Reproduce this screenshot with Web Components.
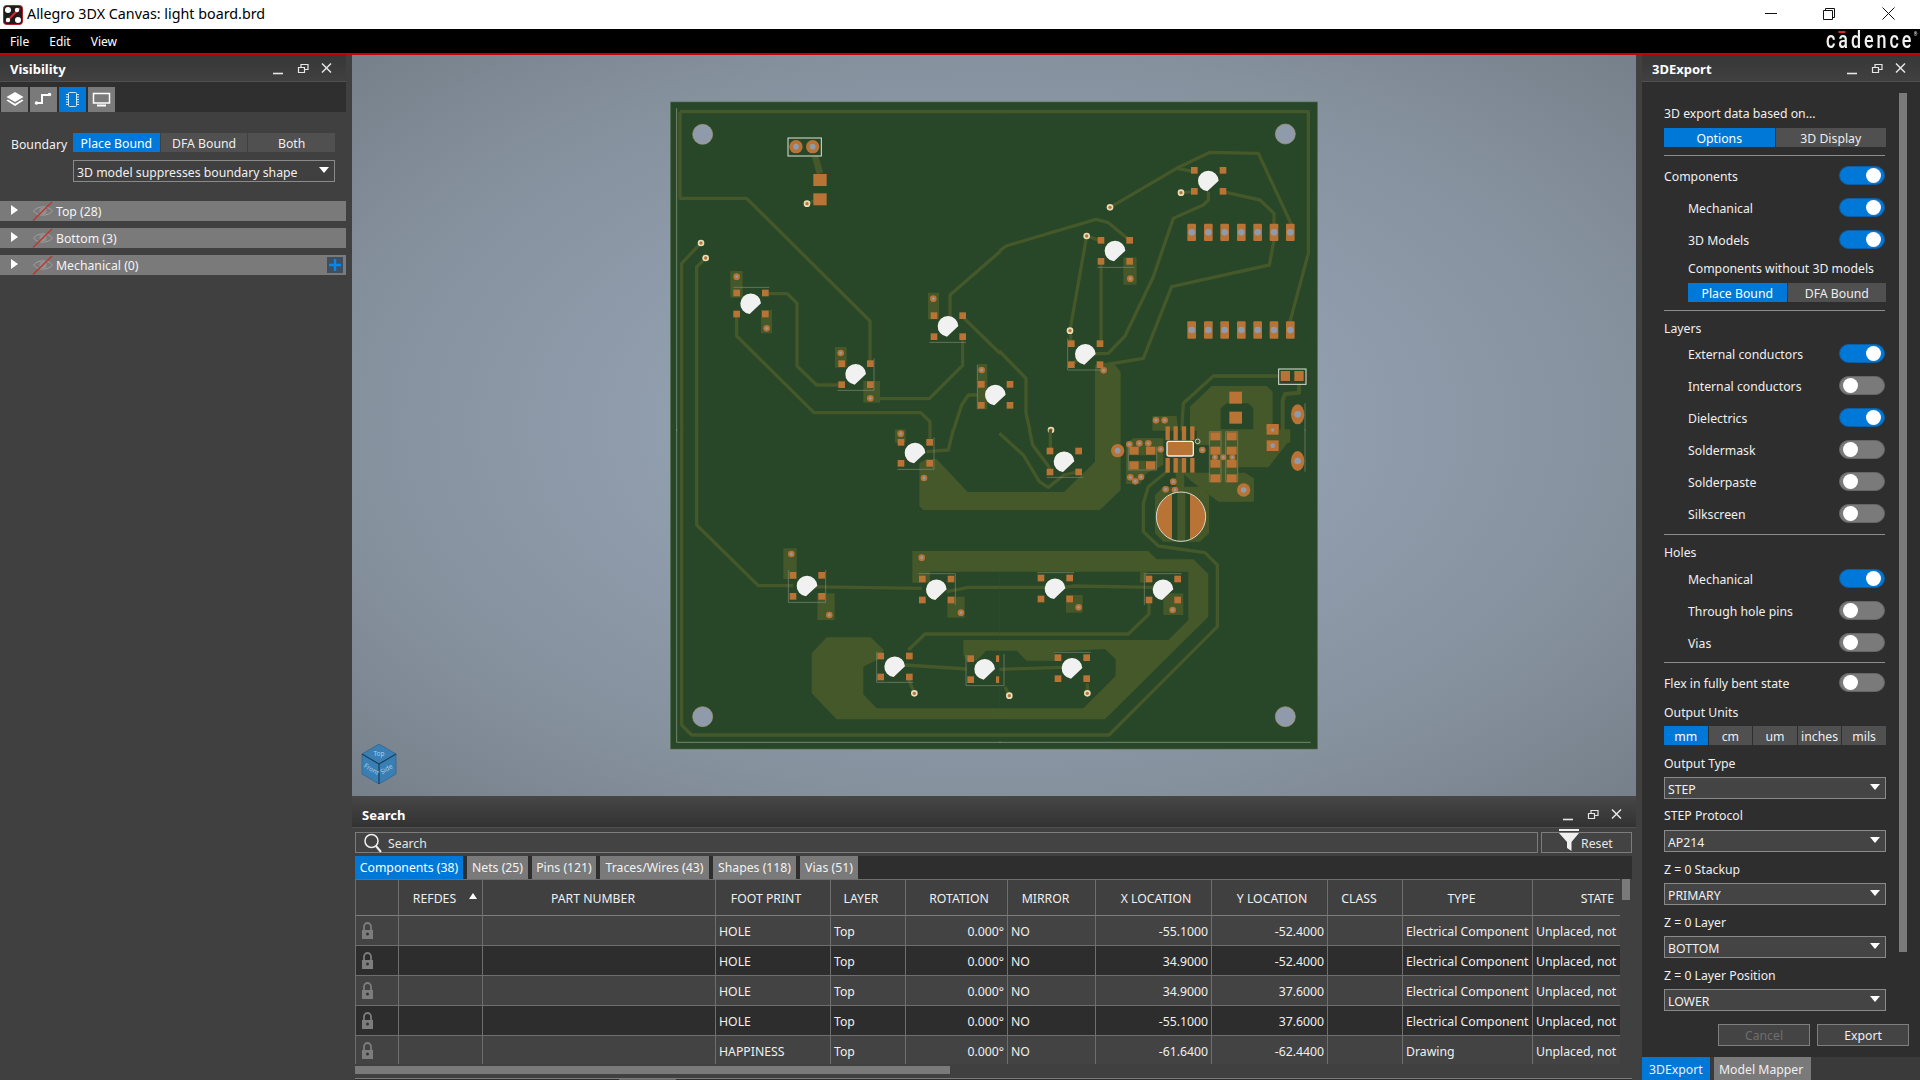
<!DOCTYPE html>
<html>
<head>
<meta charset="utf-8">
<title>Allegro 3DX Canvas</title>
<style>
html, body { margin: 0; padding: 0; width: 1920px; height: 1080px; overflow: hidden; background: #404040; }
body { font: 12.25px "Noto Sans", "Open Sans", sans-serif; color: #f0f0f0; }
main-row { display: flex; height: 1025px; }
.center { display: flex; flex-direction: column; width: 1284px; margin: 0 6px; }
</style>
</head>
<body>
<title-bar></title-bar>
<menu-bar></menu-bar>
<main-row>
  <visibility-panel></visibility-panel>
  <div class="center">
    <board-canvas></board-canvas>
    <search-panel></search-panel>
  </div>
  <export-panel>
    <opt-label style="margin-top:23px">3D export data based on...</opt-label>
    <seg-buttons items="Options|3D Display" style="margin-top:7px"></seg-buttons>
    <thin-rule style="margin-top:8px"></thin-rule>
    <toggle-row on style="margin-top:10px">Components</toggle-row>
    <toggle-row on indent style="margin-top:13px">Mechanical</toggle-row>
    <toggle-row on indent style="margin-top:13px">3D Models</toggle-row>
    <opt-label indent style="margin-top:11px">Components without 3D models</opt-label>
    <seg-buttons indent items="Place Bound|DFA Bound" style="margin-top:7px"></seg-buttons>
    <thin-rule style="margin-top:8px"></thin-rule>
    <opt-label style="margin-top:9px">Layers</opt-label>
    <toggle-row on indent style="margin-top:8px">External conductors</toggle-row>
    <toggle-row indent style="margin-top:13px">Internal conductors</toggle-row>
    <toggle-row on indent style="margin-top:13px">Dielectrics</toggle-row>
    <toggle-row indent style="margin-top:13px">Soldermask</toggle-row>
    <toggle-row indent style="margin-top:13px">Solderpaste</toggle-row>
    <toggle-row indent style="margin-top:13px">Silkscreen</toggle-row>
    <thin-rule style="margin-top:11px"></thin-rule>
    <opt-label style="margin-top:9px">Holes</opt-label>
    <toggle-row on indent style="margin-top:9px">Mechanical</toggle-row>
    <toggle-row indent style="margin-top:13px">Through hole pins</toggle-row>
    <toggle-row indent style="margin-top:13px">Vias</toggle-row>
    <thin-rule style="margin-top:10px"></thin-rule>
    <toggle-row style="margin-top:10px">Flex in fully bent state</toggle-row>
    <opt-label style="margin-top:12px">Output Units</opt-label>
    <seg-buttons items="mm|cm|um|inches|mils" style="margin-top:6px"></seg-buttons>
    <opt-label style="margin-top:10px">Output Type</opt-label>
    <drop-select style="margin-top:6px">STEP</drop-select>
    <opt-label style="margin-top:8px">STEP Protocol</opt-label>
    <drop-select style="margin-top:7px">AP214</drop-select>
    <opt-label style="margin-top:9px">Z = 0 Stackup</opt-label>
    <drop-select style="margin-top:6px">PRIMARY</drop-select>
    <opt-label style="margin-top:9px">Z = 0 Layer</opt-label>
    <drop-select style="margin-top:6px">BOTTOM</drop-select>
    <opt-label style="margin-top:9px">Z = 0 Layer Position</opt-label>
    <drop-select style="margin-top:6px">LOWER</drop-select>
  </export-panel>
</main-row>

<script>
class TitleBar extends HTMLElement {
  connectedCallback () {
    this.attachShadow({mode: "open"}).innerHTML = `<style>
      :host { display: flex; align-items: center; height: 29px; background: #fff; color: #000; }
      svg.logo { margin: 0 4px 0 3px; }
      span { font-size: 14.3px; flex: 1; padding-bottom: 2px; }
      svg.ctl { margin-right: 21px; margin-bottom: 2px; }
    </style>
    <svg class="logo" width="20" height="20" viewBox="0 0 20 20">
      <rect x=".5" y=".5" width="19" height="19" rx="3" fill="#1d1d1d" stroke="#b3202a"/>
      <path d="M3 17L17 3" stroke="#d8262f" stroke-width="2"/>
      <circle cx="5" cy="5" r="3" fill="#fff"/><circle cx="15" cy="15" r="3" fill="#fff"/>
      <circle cx="14" cy="5" r="2.2" fill="#fff"/><circle cx="5" cy="15" r="2.2" fill="#fff"/>
    </svg>
    <span>Allegro 3DX Canvas: light board.brd</span>
    <svg class="ctl" width="134" height="14" viewBox="0 0 134 14" fill="none" stroke="#111">
      <path d="M0 6.5H12"/>
      <path d="M58.5 3.5h9v9h-9zM60.5 3.5v-2h9v9h-2"/>
      <path d="M117.5 .5l12 12M129.5 .5l-12 12"/>
    </svg>`;
  }
}
customElements.define("title-bar", TitleBar);

class MenuBar extends HTMLElement {
  connectedCallback () {
    this.attachShadow({mode: "open"}).innerHTML = `<style>
      :host { display: flex; align-items: center; height: 24px; background: #000; border-bottom: 2px solid #c4000b; color: #fff; position: relative; }
      span { font-size: 12px; margin-left: 10px; margin-right: 10px; }
      .brand { margin-left: auto; margin-right: 6px; position: relative; font: 500 23px/24px Roboto, sans-serif; letter-spacing: 3.8px; transform-origin: right center; transform: scaleX(.78); color: #f2f2f2; }
      .brand i { position: absolute; left: 16px; top: 2px; width: 9px; height: 2px; background: #d8262f; }
      .brand sup { position: absolute; right: -4px; top: 2px; font-size: 6px; line-height: 6px; letter-spacing: 0; }
    </style>
    <span>File</span><span>Edit</span><span>View</span>
    <div class="brand">cadence<i></i><sup>®</sup></div>`;
  }
}
customElements.define("menu-bar", MenuBar);

class DockHeader extends HTMLElement {
  connectedCallback () {
    this.attachShadow({mode: "open"}).innerHTML = `<style>
      :host { display: flex; align-items: center; justify-content: space-between; box-sizing: border-box; height: var(--hh, 27px); padding: var(--hpt, 2px) 14px 0 10px; background: var(--hbg, linear-gradient(#373737, #404040)); border-bottom: 1px solid #505050; flex: none; }
      b { font-size: 13px; color: #fff; font-weight: 700; }
    </style>
    <b><slot></slot></b>
    <svg width="60" height="14" viewBox="0 0 60 14" fill="none" stroke="#e6e6e6">
      <path d="M1 11.5H11" stroke-width="1.6"/>
      <path d="M26.5 5.5h6v5h-6zM29 5V2.5h7v5h-3" stroke-width="1.2"/>
      <path d="M50 1.5l9 9M59 1.5l-9 9" stroke-width="1.5"/>
    </svg>`;
  }
}
customElements.define("dock-header", DockHeader);

class SegButtons extends HTMLElement {
  connectedCallback () {
    const items = this.getAttribute("items").split("|");
    const btns = items.map((t, i) => `<div class="${i == 0 ? "on" : ""}">${t}</div>`).join("");
    this.attachShadow({mode: "open"}).innerHTML = `<style>
      :host { display: flex; gap: 1px; height: 19px; ${this.hasAttribute("indent") ? "margin-left:24px;width:198px;" : "width:222px;"} }
      div { flex: 1 1 0; background: #505050; color: #eee; text-align: center; font-size: 12.25px; line-height: 21px; height: 19px; overflow: hidden; white-space: nowrap; }
      .on { background: #0078d7; color: #fff; }
    </style>${btns}`;
  }
}
customElements.define("seg-buttons", SegButtons);

class OptLabel extends HTMLElement {
  connectedCallback () {
    this.attachShadow({mode: "open"}).innerHTML = `<style>
      :host { display: block; height: 16px; line-height: 18px; font-size: 12.25px; white-space: nowrap; color: #f0f0f0; ${this.hasAttribute("indent") ? "padding-left:24px;" : ""} }
    </style><slot></slot>`;
  }
}
customElements.define("opt-label", OptLabel);

class ThinRule extends HTMLElement {
  connectedCallback () {
    this.attachShadow({mode: "open"}).innerHTML = `<style>
      :host { display: block; height: 1px; background: #8c8c8c; width: 221px; }
    </style>`;
  }
}
customElements.define("thin-rule", ThinRule);

class ToggleRow extends HTMLElement {
  connectedCallback () {
    const on = this.hasAttribute("on");
    this.attachShadow({mode: "open"}).innerHTML = `<style>
      :host { display: flex; align-items: center; justify-content: space-between; height: 19px; font-size: 12.25px; width: 221px; ${this.hasAttribute("indent") ? "padding-left:24px;width:197px;" : ""} }
      span { padding-top: 2px; }
      .sw { box-sizing: border-box; width: 46px; height: 19px; border-radius: 10px; display: flex; align-items: center; padding: 0 3px;
            background: ${on ? "#0078d7" : "#7a7a7a"}; border: 1px solid ${on ? "#0b5ea6" : "#666"}; justify-content: ${on ? "flex-end" : "flex-start"}; }
      .sw i { width: 15px; height: 15px; border-radius: 50%; background: #fff; }
    </style><span><slot></slot></span><div class="sw"><i></i></div>`;
  }
}
customElements.define("toggle-row", ToggleRow);

class DropSelect extends HTMLElement {
  connectedCallback () {
    this.attachShadow({mode: "open"}).innerHTML = `<style>
      :host { display: flex; align-items: center; justify-content: space-between; box-sizing: border-box; height: 22px; width: var(--w, 222px); margin-left: var(--ml, 0); padding: 0 5px 0 3px; background: #444; border: 1px solid #8a8a8a; font-size: 12.25px; white-space: nowrap; }
      span { padding-top: 2px; }
      i { width: 0; height: 0; border-left: 5px solid transparent; border-right: 5px solid transparent; border-top: 6px solid #fff; margin-bottom: 2px; }
    </style><span><slot></slot></span><i></i>`;
  }
}
customElements.define("drop-select", DropSelect);

const eyeOff = `<svg width="22" height="20" viewBox="0 0 22 20" fill="none">
  <path d="M1.5 10C6 4.5 16 4.5 20.5 10C16 15.5 6 15.5 1.5 10z" stroke="#a0a0a0"/>
  <circle cx="11" cy="10" r="3.6" fill="#909090"/>
  <path d="M1 19.5L20 1" stroke="#c0342c" stroke-width="1.3"/>
</svg>`;

class GroupRow extends HTMLElement {
  connectedCallback () {
    const plus = this.hasAttribute("plus");
    this.attachShadow({mode: "open"}).innerHTML = `<style>
      :host { display: flex; align-items: center; height: 20px; background: #7a7a7a; width: 346px; color: #f4f4f4; font-size: 12.25px; }
      .tri { width: 0; height: 0; border-left: 7px solid #fff; border-top: 5px solid transparent; border-bottom: 5px solid transparent; margin: 0 14px 2px 11px; }
      svg { margin-right: 2px; flex: none; }
      span { flex: 1; padding-top: 1px; }
      .plus { width: 16px; height: 16px; background: #3d4f60; margin-right: 3px; display: flex; }
      .plus svg { margin: 0; }
    </style><div class="tri"></div>${eyeOff}<span><slot></slot></span>${plus ? `<div class="plus"><svg width="16" height="16"><path d="M8 2v12M2 8h12" stroke="#0a86e8" stroke-width="2.4"/></svg></div>` : ""}`;
  }
}
customElements.define("group-row", GroupRow);

class VisibilityPanel extends HTMLElement {
  connectedCallback () {
    this.attachShadow({mode: "open"}).innerHTML = `<style>
      :host { display: block; width: 346px; height: 1025px; background: #404040; flex: none; }
      .tools { display: flex; gap: 2px; height: 30px; box-sizing: border-box; padding: 5px 0 0 1px; background: #2f2f2f; }
      .tools div { width: 27px; height: 25px; background: #7a7a7a; display: flex; }
      .tools .on { background: #0078d7; }
      .bound { display: flex; align-items: center; margin-top: 21px; height: 19px; }
      .bound span { width: 73px; box-sizing: border-box; padding-left: 11px; padding-top: 4px; }
      .bound seg-buttons { width: 262px; }
      drop-select { margin-top: 8px; --ml: 73px; --w: 262px; background: #404040; }
      group-row { margin-bottom: 7px; }
      .groups { margin-top: 19px; }
    </style>
    <dock-header>Visibility</dock-header>
    <div class="tools">
      <div><svg width="27" height="25" fill="#fff"><path d="M14 5l8.500 5-8.500 5-8.500-5z"/><path d="M7 12.500l7 4.300 7-4.300 1.500 1L14 19l-8.500-5.500z"/></svg></div>
      <div><svg width="27" height="25" fill="none" stroke="#fff" stroke-width="2"><path d="M7 16h5V8h7"/><circle cx="6.500" cy="16" r="1.800" fill="#fff" stroke="none"/><circle cx="19.500" cy="7.500" r="1.800" fill="#fff" stroke="none"/></svg></div>
      <div class="on"><svg width="27" height="25" fill="none" stroke="#cfe6fa"><rect x="9.500" y="5.500" width="8" height="14" rx="1"/><path d="M7 7.500h2M7 10h2M7 12.500h2M7 15h2M7 17.500h2M18 7.500h2M18 10h2M18 12.500h2M18 15h2M18 17.500h2"/></svg></div>
      <div><svg width="27" height="25" fill="none" stroke="#fff"><rect x="5.500" y="6.500" width="16" height="9.500" stroke-width="1.500"/><path d="M9 18.500h9" stroke-width="2"/></svg></div>
    </div>
    <div class="bound"><span>Boundary</span><seg-buttons items="Place Bound|DFA Bound|Both" style="width:262px"></seg-buttons></div>
    <drop-select>3D model suppresses boundary shape</drop-select>
    <div class="groups">
      <group-row>Top (28)</group-row>
      <group-row>Bottom (3)</group-row>
      <group-row plus>Mechanical (0)</group-row>
    </div>`;
  }
}
customElements.define("visibility-panel", VisibilityPanel);

class ExportPanel extends HTMLElement {
  connectedCallback () {
    this.attachShadow({mode: "open"}).innerHTML = `<style>
      :host { display: flex; flex-direction: column; width: 278px; height: 1025px; background: #2e2e2e; flex: none; }
      .body { display: flex; height: 929px; padding-left: 22px; }
      .col { width: 222px; display: flex; flex-direction: column; }
      .sb { width: 8px; height: 859px; margin: 11px 0 0 13px; background: #7a7a7a; }
      .acts { display: flex; gap: 7px; margin: 13px 0 0 76px; }
      .acts div { box-sizing: border-box; width: 92px; height: 22px; line-height: 22px; text-align: center; background: #444; border: 1px solid #7e7e7e; font-size: 12.25px; }
      .acts .off { color: #6e6e6e; }
      .tabs { display: flex; gap: 4px; height: 23px; margin-top: 11px; background: #3a3a3a; }
      .tabs div { line-height: 25px; font-size: 12.25px; padding: 0 7px; white-space: nowrap; }
      .tabs .on { background: #0078d7; width: 54px; }
      .tabs .off { background: #7a7a7a; width: 91px; padding: 0 1px 0 5px; }
    </style>
    <dock-header>3DExport</dock-header>
    <div class="body"><div class="col"><slot></slot></div><div class="sb"></div></div>
    <div class="acts"><div class="off">Cancel</div><div>Export</div></div>
    <div class="tabs"><div class="on">3DExport</div><div class="off">Model Mapper</div></div>`;
  }
}
customElements.define("export-panel", ExportPanel);

// board geometry is in crop units: 3 units = 1 screen px, each quadrant is 1020 units
const OLIVE = "#45582a", BOARD = "#284628", COPPER = "#b97335", HOLE = "#8f9bab";

const pl = (pts, w = 10) => `<polyline points="${pts}" fill="none" stroke="${OLIVE}" stroke-width="${w}" stroke-linejoin="round"/>`;
const poly = (pts, f = OLIVE) => `<polygon points="${pts}" fill="${f}"/>`;
const silk = (pts, c = "#7f8c75", w = 2) => `<polyline points="${pts}" fill="none" stroke="${c}" stroke-width="${w}"/>`;
const pad = (x, y, w = 20, h = 20) => `<rect x="${x - w / 2}" y="${y - h / 2}" width="${w}" height="${h}" fill="${COPPER}"/>`;
const via = (x, y, r = 10) => `<circle cx="${x}" cy="${y}" r="${r}" fill="${COPPER}"/><circle cx="${x}" cy="${y}" r="${r * .42}" fill="${HOLE}"/>`;
const cream = (x, y) => `<circle cx="${x}" cy="${y}" r="10" fill="#e6deb8"/><circle cx="${x}" cy="${y}" r="5" fill="${COPPER}"/>`;
const mount = (x, y) => `<circle cx="${x}" cy="${y}" r="30" fill="${HOLE}" stroke="#a59a72" stroke-width="2"/>`;
const strip = (x, y, w, h) => `<rect x="${x}" y="${y}" width="${w}" height="${h}" fill="${OLIVE}"/>`;
const drill = (x, y) => `<rect x="${x - 13}" y="${y - 26}" width="26" height="52" rx="3" fill="${COPPER}"/><circle cx="${x}" cy="${y}" r="10" fill="${HOLE}"/>`;
const led = (x, y) =>
  pad(x - 42, y - 31) + pad(x + 44, y - 31) + pad(x - 42, y + 32) + pad(x + 44, y + 32) +
  `<path transform="translate(${x} ${y})" d="M31 0L-3 32A31 31 0 1 1 31 0z" fill="#f1f1f1"/>`;

const quadA = [
  strip(211, 543, 37, 80), strip(303, 660, 33, 70), strip(525, 771, 35, 62), strip(610, 873, 50, 65), strip(804, 608, 33, 80), strip(952, 822, 30, 136),
  pl("60,65 1022,65"), pl("60,65 60,325 260,325 630,693 630,815"), pl("65,1022 65,520 122,460"), pl("110,1022 110,530 137,505"),
  pl("230,680 230,738 462,968 782,968 810,995 810,1022"), pl("316,611 382,611 411,640 411,828 470,885 545,885"),
  pl("632,926 808,926 908,826 908,740"), pl("870,680 870,615 1022,483"), pl("880,1022 905,945 925,915 990,915"), pl("907,680 1022,792"),
  pl("465,198 480,250", 20), pl("445,340 480,322", 8),
  silk("50,55 50,1022", "#9aa892"),
  silk("220,592 328,592"), silk("532,901 642,901 642,805"), silk("808,757 918,757"), silk("952,825 952,958"),
  mount(128, 133),
  `<rect x="384" y="144" width="100" height="54" fill="none" stroke="#dfe3dc" stroke-width="3"/>`,
  via(408, 170, 20), via(458, 170, 20), pad(480, 270, 40, 36), pad(480, 328, 40, 36),
  cream(441, 341), cream(123, 459), cream(137, 504),
  led(272, 640), led(587, 852), led(864, 708), led(1006, 914),
  via(230, 560), via(320, 715), via(542, 789), via(631, 925), via(820, 626), via(965, 840)
];

const quadB = [
  poly("285,825 345,825 362,845 362,1022 285,1022"),
  poly("570,1022 570,950 635,888 800,888 818,905 818,1022"), poly("680,940 745,940 760,955 760,1022 662,1022 662,955", BOARD),
  poly("457,978 530,978 535,1022 457,1022"),
  strip(370, 502, 40, 82),
  pl("-2,65 925,65 925,490 870,695"), pl("-2,483 18,468 288,388 325,398 388,450"),
  pl("330,352 530,235 630,187 775,190 875,405"), pl("530,235 583,245"), pl("545,308 583,305"),
  pl("625,305 625,330 610,345 520,385 460,560 375,738 325,790 255,792 215,824"),
  pl("668,305 780,330 822,370 822,405"), pl("822,450 808,525 515,590 430,805 310,825"),
  pl("260,438 300,452"), pl("260,438 210,720 214,762"), pl("303,515 303,762"),
  pl("-2,783 78,865 78,970 90,1022"), pl("545,1022 550,940 640,858 835,858"),
  pl("897,883 897,908 855,912 848,930 848,1022", 12), pl("153,1017 153,1022"),
  silk("292,532 403,532"), silk("203,745 203,840 310,840"), silk("915,940 915,1022"),
  mount(856, 132),
  ...[575, 625, 674, 724, 773, 822, 871].flatMap(x => [drill(x, 427), drill(x, 720)]),
  cream(330, 352), cream(543, 308), cream(260, 438), cream(210, 722), cream(153, 1020),
  led(625, 272), led(345, 482), led(256, 792),
  via(391, 566), via(311, 841),
  `<rect x="836" y="837" width="82" height="46" fill="none" stroke="#dfe3dc" stroke-width="3"/>`,
  pad(856, 858, 28, 30), pad(897, 858, 28, 30), pad(707, 923, 38, 36), pad(707, 983, 38, 36),
  `<ellipse cx="893" cy="973" rx="20" ry="30" fill="${COPPER}"/><circle cx="893" cy="973" r="10" fill="${HOLE}"/>`,
  via(468, 991), via(494, 991), pad(818, 1020, 36, 32)
];

const quadC = [
  poly("757,363 1022,363 1022,425 810,425 810,458 757,458"),
  poly("910,630 1022,630 1022,662 978,662 950,692 920,692 910,672"),
  poly("500,622 632,622 672,660 650,690 610,710 610,793 650,835 1022,835 1022,868 530,868 455,790 455,670"),
  poly("800,87 830,87 923,186 1022,186 1022,240 790,240 778,228 778,100"),
  strip(370, 355, 40, 92), strip(472, 490, 52, 80), strip(862, 500, 52, 63), strip(705, -2, 32, 40),
  pl("65,-2 65,885 95,915 1022,915"), pl("110,-2 110,285 295,467 400,467"), pl("440,470 785,475"), pl("860,485 925,472 1022,472"),
  pl("745,660 795,612 1022,612"), pl("735,705 920,717"), pl("745,745 763,790"), pl("810,-2 810,30"), pl("880,-2 865,60 800,65"),
  silk("50,-2 50,937 1022,937", "#9aa892"),
  silk("385,420 385,517 497,517 497,420"), silk("775,431 886,431 886,525"), silk("712,118 822,118 822,22"),
  silk("650,665 650,757 760,757"), silk("918,675 918,767 1022,767"),
  mount(128, 860),
  led(765, 68), led(441, 467), led(829, 478), led(704, 709), led(974, 717),
  via(722, 11), via(394, 372), via(508, 555), via(785, 383), via(903, 548), via(792, 144), cream(763, 790)
];

const quadD = [
  poly("-2,363 445,363 470,388 580,388 625,432 625,560 315,868 -2,868"),
  poly("-2,425 565,425 565,570 505,630 -2,630", BOARD),
  poly("-2,662 50,662 80,692 165,692 165,665 315,657 347,688 347,738 250,835 -2,835", BOARD),
  poly("285,-2 362,-2 362,180 300,240 -2,240 -2,186 192,186 285,95"),
  poly("590,-2 862,-2 862,40 805,112 715,112 715,160 630,160 630,45 590,45"),
  poly("548,128 735,128 762,145 762,215 655,215 570,150"),
  poly("378,40 400,25 490,25 490,105 440,130 420,162 378,162"),
  `<rect x="386" y="76" width="84" height="16" fill="${BOARD}"/>`,
  poly("465,195 490,170 600,170 627,195 627,310 600,335 490,335 465,310"),
  strip(198, 495, 50, 53), strip(490, 490, 60, 65), strip(527, 85, 26, 100), strip(420, 425, 20, 33),
  pl("-2,915 327,915 652,590 652,405 615,368 475,348 430,305 430,220 445,170 500,125"),
  pl("-2,612 385,612 447,552 447,515"), pl("-2,718 190,712"), pl("15,770 28,797"), pl("262,760 262,790"),
  pl("-2,472 135,472"), pl("190,472 225,468 460,472"), pl("151,60 151,-2"),
  pl("-2,10 70,75 118,155 145,172 192,135 235,125"), pl("88,-2 98,45 150,115"),
  pl("865,-2 865,38", 12),
  silk("-2,937 932,937", "#9aa892"), silk("-2,767 12,767 12,672"),
  silk("140,142 250,142"), silk("112,428 222,428"), silk("433,525 433,431 545,431"), silk("163,667 272,667"),
  silk("915,-2 915,125"),
  silk("385,50 385,120 470,120 470,50"), silk("628,5 628,155 663,155 663,5 628,5"), silk("677,5 677,155 713,155 713,5 677,5"),
  mount(856, 860),
  via(353, 62, 20), via(731, 180, 20),
  `<ellipse cx="893" cy="93" rx="20" ry="30" fill="${COPPER}"/><circle cx="893" cy="93" r="10" fill="${HOLE}"/>`,
  pad(818, -2, 36, 32), via(818, 0, 12), pad(818, 47, 36, 32), `<circle cx="818" cy="47" r="7" fill="${HOLE}"/>`,
  ...[388, 418, 445, 482, 607, 520, 497, 525, 391, 406, 423].map((x, i) => via(x, [43, 40, 40, 58, 60, 155, 178, 180, 142, 154, 141][i])),
  ...[[402, 62, 28, 24], [452, 62, 28, 24], [402, 106, 28, 24], [452, 106, 28, 24]].map(p => pad(...p)),
  ...[19, 62, 101, 145].flatMap(y => [pad(646, y, 30, 24), pad(695, y, 30, 24)]),
  via(645, 82, 9), via(670, 82, 9), via(697, 82, 9),
  ...[503, 527, 552, 577].flatMap(x => [pad(x, 10, 13, 42), pad(x, 106, 13, 44)]),
  `<rect x="501" y="34" width="79" height="44" rx="6" fill="${COPPER}" stroke="#eee" stroke-width="4"/>`,
  `<circle cx="593" cy="34" r="7" fill="none" stroke="#ddd" stroke-width="2.500"/>`,
  `<clipPath id="capclip"><circle cx="543" cy="260" r="74"/></clipPath>
   <g clip-path="url(#capclip)"><rect x="460" y="180" width="56" height="160" fill="${COPPER}"/><rect x="570" y="180" width="56" height="160" fill="${COPPER}"/>
   <rect x="516" y="180" width="16" height="160" fill="${BOARD}"/><rect x="556" y="180" width="14" height="160" fill="${BOARD}"/></g>
   <circle cx="543" cy="260" r="74" fill="none" stroke="#d8d9cf" stroke-width="3"/>`,
  led(192, 94), led(165, 475), led(489, 478), led(216, 714),
  via(236, 532), via(518, 540), cream(28, 797), cream(262, 790)
];

class BoardCanvas extends HTMLElement {
  connectedCallback () {
    const g = (dx, dy, items) => `<g transform="translate(${dx} ${dy})">${items.join("")}</g>`;
    this.attachShadow({mode: "open"}).innerHTML = `<style>
      :host { display: block; position: relative; width: 1284px; height: 741px; flex: none; overflow: hidden;
              background: radial-gradient(ellipse farthest-corner at 50% 50%, #99a6b7 0%, #919eae 35%, #86919e 71%, #75808a 100%); }
      svg.board { display: block; filter: blur(.4px); }
      view-cube { position: absolute; left: 9px; top: 689px; }
    </style>
    <svg class="board" width="1284" height="741" viewBox="-924 -105 3852 2223">
      <rect x="32" y="36" width="1940" height="1941" fill="${BOARD}" stroke="#4e6a40" stroke-width="2"/>
      ${g(0, 0, quadA)}${g(1020, 0, quadB)}${g(0, 1020, quadC)}${g(1020, 1020, quadD)}
    </svg>
    <view-cube></view-cube>`;
  }
}
customElements.define("board-canvas", BoardCanvas);

class ViewCube extends HTMLElement {
  connectedCallback () {
    this.attachShadow({mode: "open"}).innerHTML = `<style>
      :host { display: block; width: 36px; height: 41px; }
      text { font: 6.500px "Noto Sans", sans-serif; fill: #a9cfea; text-anchor: middle; }
    </style>
    <svg width="36" height="41" viewBox="0 0 36 41">
      <path d="M18 0L35 10V30L18 40L1 30V10z" fill="#3a7fb4" stroke="#2b5a80" stroke-width=".6"/>
      <path d="M1 10L18 20L35 10M18 20V40" fill="none" stroke="#1f3d58" stroke-width="1.200"/>
      <text transform="translate(18 12)">Top</text>
      <text transform="translate(9.500 27) rotate(30)">Front</text>
      <text transform="translate(26.500 27) rotate(-30)">Side</text>
    </svg>`;
  }
}
customElements.define("view-cube", ViewCube);

const lockIcon = `<svg width="13" height="18" viewBox="0 0 13 18"><path d="M3 8V4.500a3.500 3.500 0 0 1 7 0V8" fill="none" stroke="#7d7d7d" stroke-width="1.800"/><path d="M1 8h11v9H1z" fill="#7d7d7d"/><circle cx="6.500" cy="12" r="1.500" fill="#333"/></svg>`;
const COLS = [43, 84, 233, 115, 75, 102, 88, 116, 116, 75, 130, 88];
// second value is the right padding, third the left one: the titles are not quite centred in their columns
const HEADS = [["", 0, 0], ["REFDES", 12, 0], ["PART NUMBER", 12, 0], ["FOOT PRINT", 14, 0], ["LAYER", 14, 0], ["ROTATION", 0, 5], ["MIRROR", 12, 0], ["X LOCATION", 0, 5], ["Y LOCATION", 0, 5], ["CLASS", 12, 0], ["TYPE", 12, 0], ["STATE", 0, 0]];
const ROWS = [
  ["HOLE", "-55.1000", "-52.4000", "Electrical Component"],
  ["HOLE", "34.9000", "-52.4000", "Electrical Component"],
  ["HOLE", "34.9000", "37.6000", "Electrical Component"],
  ["HOLE", "-55.1000", "37.6000", "Electrical Component"],
  ["HAPPINESS", "-61.6400", "-62.4400", "Drawing"]
];

class DataTable extends HTMLElement {
  connectedCallback () {
    const head = HEADS.map(([t, pr, pl], i) =>
      `<div class="h${i == 11 ? " end" : ""}" style="padding:0 ${pr}px 0 ${pl}px">${t}${i == 1 ? '<i class="sort"></i>' : ""}</div>`).join("");
    const rows = ROWS.map((r, n) => {
      const cells = [lockIcon, "", "", r[0], "Top", "0.000°", "NO", r[1], r[2], "", r[3], "Unplaced, not"];
      return `<div class="row ${n % 2 ? "dark" : ""} ${n == 4 ? "last" : ""}">` + cells.map((c, i) =>
        `<div class="c ${[5, 7, 8].includes(i) ? "r" : ""} ${i == 0 ? "lk" : ""}">${c}</div>`).join("") + `</div>`;
    }).join("");
    this.attachShadow({mode: "open"}).innerHTML = `<style>
      :host { display: block; width: 1265px; height: 185px; overflow: hidden; flex: none; font-size: 12.25px; }
      .row, .hd { display: grid; grid-template-columns: ${COLS.map(c => c + "px").join(" ")}; }
      .hd { height: 37px; background: #404040; border-bottom: 0; }
      .h { position: relative; box-sizing: border-box; border-left: 1px solid #6e6e6e; border-bottom: 1px solid #7c7c7c; border-top: 1px solid #6e6e6e; text-align: center; line-height: 37px; white-space: nowrap; overflow: hidden; }
      .end { text-align: right; padding-right: 6px !important; }
      .sort { position: absolute; right: 5px; top: 13px; border-left: 4px solid transparent; border-right: 4px solid transparent; border-bottom: 6px solid #fff; }
      .row { height: 30px; background: #434343; }
      .dark { background: #2d2d2d; }
      .c { box-sizing: border-box; border-left: 1px solid #6e6e6e; border-bottom: 1px solid #6e6e6e; padding: 0 3px 0 3px; line-height: 31px; white-space: nowrap; overflow: hidden; }
      .last .c { border-bottom: 0; }
      .r { text-align: right; }
      .lk { padding: 6px 0 0 5px; line-height: 0; }
    </style>
    <div class="hd">${head}</div>${rows}`;
  }
}
customElements.define("data-table", DataTable);

class SearchPanel extends HTMLElement {
  connectedCallback () {
    const tabs = [["Components (38)", 108], ["Nets (25)", 61], ["Pins (121)", 64], ["Traces/Wires (43)", 109], ["Shapes (118)", 83], ["Vias (51)", 58]];
    this.attachShadow({mode: "open"}).innerHTML = `<style>
      :host { display: flex; flex-direction: column; height: 284px; background: #404040; flex: none; }
      dock-header { --hh: 32px; --hpt: 7px; --hbg: linear-gradient(#474747, #323232); }
      .wrap { padding: 0 4px 0 3px; display: flex; flex-direction: column; }
      .find { display: flex; gap: 3px; margin-top: 4px; height: 21px; }
      .input, .reset { box-sizing: border-box; height: 21px; background: #434343; border: 1px solid #7c7c7c; display: flex; align-items: center; color: #e6e6e6; }
      .input span, .reset span { padding-top: 2px; }
      .input { width: 1184px; padding-left: 7px; gap: 5px; }
      .reset { width: 91px; padding-left: 17px; gap: 2px; overflow: visible; }
      .tabs { display: flex; gap: 4px; height: 23px; margin-top: 3px; background: #2e2e2e; }
      .tabs div { background: #7a7a7a; text-align: center; line-height: 24px; white-space: nowrap; color: #f2f2f2; }
      .tabs .on { background: #0078d7; color: #fff; }
      .grid { display: flex; }
      .vs { flex: none; width: 12px; background: #404040; }
      .vs i { display: block; width: 8px; height: 21px; margin-left: 2px; background: #7a7a7a; }
      .hs { height: 10px; margin-top: 2px; }
      .hs i { display: block; width: 595px; height: 8px; background: #7a7a7a; }
      .foot { margin-top: 2px; border-top: 1px solid #7c7c7c; height: 3px; background: #2e2e2e; }
      .foot i { display: block; width: 57px; height: 3px; margin-left: 264px; background: #6a6a6a; }
    </style>
    <dock-header>Search</dock-header>
    <div class="wrap">
      <div class="find">
        <div class="input"><svg width="20" height="20" viewBox="0 0 20 20" fill="none" stroke="#f0f0f0" stroke-width="1.500"><circle cx="8.500" cy="8" r="6.500"/><path d="M13 13l5 6" stroke-width="2"/></svg><span>Search</span></div>
        <div class="reset"><svg width="20" height="22" viewBox="0 0 20 22" fill="#f0f0f0" style="margin-top:-5px"><path d="M0 0h20v2H0zM0 4h20l-7.500 9v9l-4.500-3v-6z"/></svg><span>Reset</span></div>
      </div>
      <div class="tabs">${tabs.map(([t, w], i) => `<div class="${i == 0 ? "on" : ""}" style="width:${w}px">${t}</div>`).join("")}</div>
      <div class="grid"><data-table></data-table><div class="vs"><i></i></div></div>
      <div class="hs"><i></i></div>
      <div class="foot"><i></i></div>
    </div>`;
  }
}
customElements.define("search-panel", SearchPanel);
</script>
</body>
</html>
